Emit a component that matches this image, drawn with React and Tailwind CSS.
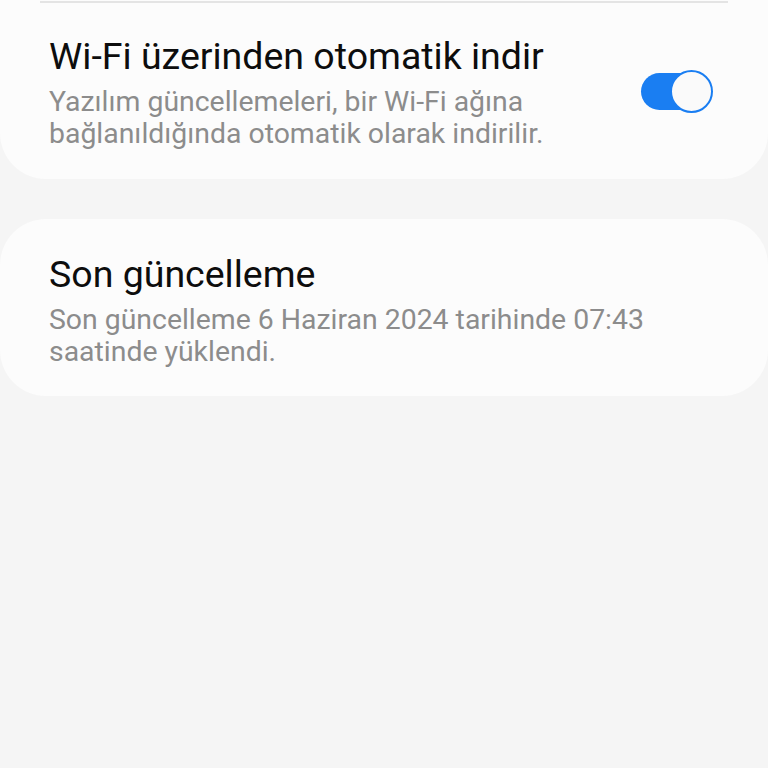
import React, { useState } from 'react';

const Toggle = ({ on, onChange }) => (
  <button
    type="button"
    onClick={() => onChange(!on)}
    className="relative w-[72px] h-[46px] shrink-0"
  >
    <span
      className={`absolute left-0 top-[4px] w-[60px] h-[37px] rounded-full ${on ? 'bg-[#1a7ef2]' : 'bg-[#c9c9c9]'}`}
    />
    <span
      className={`absolute top-[1px] w-[43px] h-[43px] rounded-full bg-[#fafafa] border-[2.5px] ${on ? 'left-[29px] border-[#1a7ef2]' : 'left-0 border-[#c9c9c9]'}`}
    />
  </button>
);

const SettingText = ({ title, desc }) => (
  <div className="flex-1">
    <div className="text-[37.5px] leading-[44px] text-[#0d0d0d]">{title}</div>
    <div className="mt-[8px] text-[28.4px] leading-[32px] text-[#8c8c8c]">{desc}</div>
  </div>
);

export default function App() {
  const [wifiAuto, setWifiAuto] = useState(true);

  return (
    <div
      className="min-h-screen bg-[#f5f5f5] overflow-hidden"
      style={{ fontFamily: 'Roboto, "Noto Sans", sans-serif' }}
    >
      {/* Auto-download card (continues above the fold) */}
      <div className="bg-[#fcfcfc] rounded-b-[46px]">
        <div className="mx-10 pt-[1px]">
          <div className="h-[2px] bg-[#e4e4e4]" />
        </div>
        <div className="flex items-center pl-[49px] pr-[55px] pt-[31px] pb-[29px]">
          <SettingText
            title="Wi-Fi üzerinden otomatik indir"
            desc={<>Yazılım güncellemeleri, bir Wi-Fi ağına<br />bağlanıldığında otomatik olarak indirilir.</>}
          />
          <Toggle on={wifiAuto} onChange={setWifiAuto} />
        </div>
      </div>

      {/* Last update card */}
      <div className="mt-[40px] bg-[#fcfcfc] rounded-[46px] pl-[49px] pr-[55px] pt-[33px] pb-[28px]">
        <SettingText
          title="Son güncelleme"
          desc={<>Son güncelleme 6 Haziran 2024 tarihinde 07:43<br />saatinde yüklendi.</>}
        />
      </div>
    </div>
  );
}
